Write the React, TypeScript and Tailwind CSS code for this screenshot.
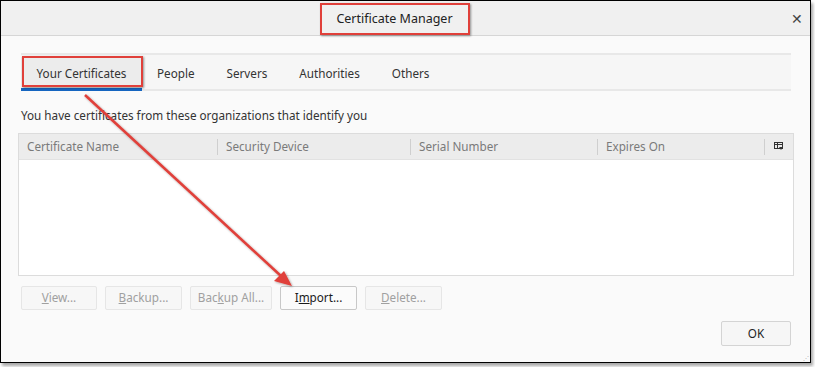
import React from "react";

const font = { fontFamily: '"Noto Sans", "Open Sans", Arial, sans-serif' };

function Btn({ children, active = false, w = "w-[77px]" }: { children: React.ReactNode; active?: boolean; w?: string }) {
  return (
    <div
      className={`${w} h-[24px] flex items-center justify-center text-[11.7px] rounded-[2px] border ${
        active ? "border-[#c8c8c8] bg-[#fbfbfb] text-[#1a1a1a]" : "border-[#e6e6e6] bg-[#f7f7f7] text-[#a0a0a0]"
      }`}
    >
      {children}
    </div>
  );
}

export default function App() {
  return (
    <div className="w-[815px] h-[367px] bg-white relative overflow-hidden" style={font}>
      <div className="w-[811px] h-[363px] border border-black bg-[#fafafa] flex flex-col shadow-[2px_3px_3px_rgba(0,0,0,0.35)]">
        {/* title bar */}
        <div className="h-[35px] bg-[#f0f0f0] border-b border-[#d6d6d6] flex items-center relative shrink-0">
          <div className="flex-1 flex justify-center pt-[3px]">
            <span className="text-[12.5px] text-[#222] ml-[-22px]">Certificate Manager</span>
          </div>
          <span className="absolute right-[7px] top-[11px] text-[14px] text-[#444] leading-none">✕</span>
        </div>
        {/* content */}
        <div className="flex-1 flex flex-col px-[17px] pt-[17px] relative">
          {/* tabs */}
          <div className="ml-[3px] w-[770px] h-[38px] bg-[#f6f6f6] border-t-2 border-b-2 border-[#e8e8e8] flex items-stretch">
            <div className="w-[121px] bg-[#ececec] border-b-[3px] border-[#1565c0] flex items-center justify-center text-[11.7px] text-[#333] mt-[2px] -mb-[2px] pt-[2px]">
              Your Certificates
            </div>
            <div className="flex items-center text-[11.7px] text-[#333] gap-[32px] ml-[15px] pt-[3px]">
              <span>People</span>
              <span>Servers</span>
              <span>Authorities</span>
              <span>Others</span>
            </div>
          </div>
          <div className="mt-[19px] ml-[3px] text-[11.7px] text-[#333] leading-none h-[14px]">
            You have certificates from these organizations that identify you
          </div>
          {/* table */}
          <div className="mt-[9px] w-[776px] h-[143px] border border-[#dcdcdc] bg-white flex flex-col">
            <div className="h-[26px] bg-[#ececec] flex items-center text-[11.7px] text-[#7a7a7a] border-b border-[#e2e2e2]">
              <div className="w-[199px] pl-[8px] border-r border-[#cfcfcf] h-[16px] flex items-center">Certificate Name</div>
              <div className="w-[193px] pl-[8px] border-r border-[#cfcfcf] h-[16px] flex items-center">Security Device</div>
              <div className="w-[187px] pl-[8px] border-r border-[#cfcfcf] h-[16px] flex items-center">Serial Number</div>
              <div className="w-[167px] pl-[8px] border-r border-[#cfcfcf] h-[16px] flex items-center">Expires On</div>
              <div className="flex-1 flex items-center justify-center">
                <svg width="10" height="9" viewBox="0 0 10 9">
                  <rect x="0.5" y="0.5" width="8" height="6" fill="none" stroke="#333" />
                  <line x1="0.5" y1="2.5" x2="8.5" y2="2.5" stroke="#333" />
                  <line x1="3.5" y1="0.5" x2="3.5" y2="6.5" stroke="#333" />
                  <path d="M5 5 L9 5 L7 8 Z" fill="#333" />
                </svg>
              </div>
            </div>
          </div>
          {/* buttons */}
          <div className="mt-[10px] ml-[3px] flex gap-[8px]">
            <Btn w="w-[76px]"><span><u>V</u>iew...</span></Btn>
            <Btn><span><u>B</u>ackup...</span></Btn>
            <Btn w="w-[82px]"><span>Bac<u>k</u>up All...</span></Btn>
            <Btn active><span>I<u>m</u>port...</span></Btn>
            <Btn><span><u>D</u>elete...</span></Btn>
          </div>
          <div className="flex justify-end mr-[2px] mt-[11px]">
            <div className="w-[70px] h-[25px] flex items-center justify-center text-[11.7px] text-[#222] border border-[#d4d4d4] bg-[#f6f6f6] rounded-[2px]">
              OK
            </div>
          </div>
        </div>
      </div>

      {/* annotations */}
      <div className="absolute left-[320px] top-[3px] w-[150px] h-[32px] border-2 border-[#e0403a] shadow-[1px_1px_2px_rgba(0,0,0,0.4)]" />
      <div className="absolute left-[22px] top-[56px] w-[121px] h-[31px] border-2 border-[#e0403a] shadow-[1px_1px_2px_rgba(0,0,0,0.4)]" />
      <svg className="absolute left-0 top-0" width="815" height="367" viewBox="0 0 815 367">
        <defs>
          <filter id="sh" x="-10%" y="-10%" width="130%" height="130%">
            <feDropShadow dx="1" dy="1" stdDeviation="0.8" floodColor="#000" floodOpacity="0.35" />
          </filter>
        </defs>
        <g filter="url(#sh)">
          <line x1="85" y1="95" x2="281" y2="276" stroke="#e0403a" strokeWidth="2.5" />
          <path d="M292 286 L274 281 L284 271 Z" fill="#e0403a" />
        </g>
      </svg>
      {/* resize grip */}
      <div className="absolute left-[803px] top-[355px] text-[6px] text-[#aaa] leading-none">⋰</div>
    </div>
  );
}
